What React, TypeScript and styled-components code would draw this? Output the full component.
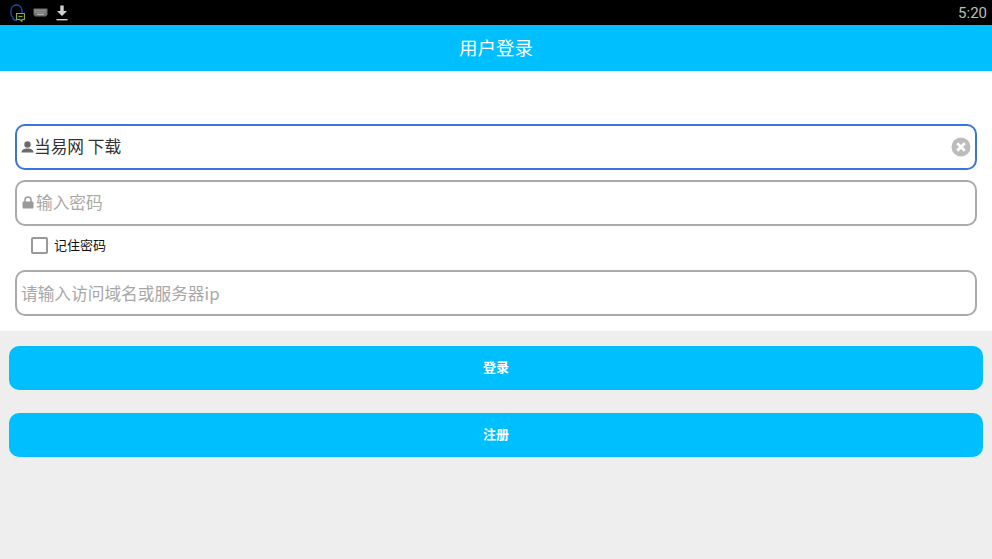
import React, { FC, ReactNode } from 'react';
import styled, { createGlobalStyle } from 'styled-components';

const FONT = `"Noto Sans CJK SC", "Liberation Sans", sans-serif`;

const GlobalStyle = createGlobalStyle`
  html, body {
    margin: 0;
    padding: 0;
    height: 100%;
    background: #eeeeee;
    font-family: ${FONT};
  }
  * {
    box-sizing: border-box;
  }
`;

const HeadsetIcon: FC = () => (
  <svg width="15" height="18" viewBox="0 0 15 18" fill="none">
    <path d="M3.500 13.500C1.800 12.800 1 11.500 1 9.500V6.500a5.500 5.500 0 0 1 11 0V9" stroke="#1a4cb4" strokeWidth="1.300" />
    <path d="M2.500 14c1 1.800 2.500 2.500 4.500 2.500" stroke="#1a4cb4" strokeWidth="1.300" />
    <path d="M6.500 9.500h8v6h-2.500v2l-2-2H6.500z" fill="#0c100a" stroke="#8aa82a" strokeWidth="1.100" />
    <path d="M8.500 12.500h4" stroke="#8aa82a" strokeWidth="1" />
  </svg>
);

const KeyboardIcon: FC = () => (
  <svg width="15" height="9" viewBox="0 0 15 9">
    <path d="M0.500 0.500h14v6l-1.500 2H2l-1.500-2z" fill="#6e6e6e" />
    <path d="M1.500 2.200h12M1.500 4.200h12" stroke="#c4c4c4" strokeWidth="1" strokeDasharray="1 1" />
    <path d="M4 6.300h7" stroke="#c4c4c4" strokeWidth="1" />
  </svg>
);

const DownloadIcon: FC = () => (
  <svg width="12" height="16" viewBox="0 0 12 16">
    <path d="M4.300 0.500h3.400v5.500H11L6 11 1 6h3.300z" fill="#d0d0d0" />
    <rect x="0.500" y="14" width="11" height="1.400" fill="#d0d0d0" />
  </svg>
);

const UserIcon: FC = () => (
  <svg width="13" height="12" viewBox="0 0 13 12">
    <circle cx="6.500" cy="3.500" r="3.200" fill="#6b6b6b" />
    <path d="M0.500 11.500c0-2.800 2.500-4 6-4s6 1.200 6 4z" fill="#6b6b6b" />
  </svg>
);

const LockIcon: FC = () => (
  <svg width="15" height="13" viewBox="0 0 15 13">
    <path d="M4 6V4a3 3 0 0 1 6 0v2" fill="none" stroke="#9a9a9a" strokeWidth="1.500" />
    <rect x="1.500" y="5.500" width="11" height="7" rx="1" fill="#9a9a9a" />
  </svg>
);

const ClearIcon: FC = () => (
  <svg width="20" height="20" viewBox="0 0 20 20">
    <circle cx="10" cy="10" r="9.500" fill="#bcbcbc" />
    <path d="M6.200 6.200l7.600 7.600M13.800 6.200l-7.600 7.600" stroke="#fff" strokeWidth="2.800" />
  </svg>
);

type FieldProps = {
  icon?: ReactNode;
  active?: boolean;
  value?: string;
  placeholder?: string;
  trailing?: ReactNode;
};

const Field: FC<FieldProps> = ({ icon, active = false, value, placeholder, trailing }) => (
  <FieldBox $active={active} $bare={!icon}>
    {icon && <FieldIcon>{icon}</FieldIcon>}
    <FieldText $filled={!!value}>{value ?? placeholder}</FieldText>
    {trailing}
  </FieldBox>
);

const App: FC = () => {
  return (
    <Page>
      <GlobalStyle />
      <StatusBar>
        <StatusIcons>
          <HeadsetIcon />
          <KeyboardIcon />
          <DownloadIcon />
        </StatusIcons>
        <Clock>5:20</Clock>
      </StatusBar>
      <Header>用户登录</Header>
      <Form>
        <Field
          active
          icon={<UserIcon />}
          value="当易网 下载"
          trailing={
            <ClearSlot>
              <ClearIcon />
            </ClearSlot>
          }
        />
        <Field icon={<LockIcon />} placeholder="输入密码" />
        <RememberRow>
          <Checkbox />
          <RememberLabel>记住密码</RememberLabel>
        </RememberRow>
        <Field placeholder="请输入访问域名或服务器ip" />
      </Form>
      <Actions>
        <ActionButton>登录</ActionButton>
        <ActionButton>注册</ActionButton>
      </Actions>
    </Page>
  );
};

export default App;

const Page = styled.div`
  width: 992px;
  height: 559px;
  overflow: hidden;
  display: flex;
  flex-direction: column;
  background: #eeeeee;
`;

const StatusBar = styled.div`
  height: 25px;
  background: #000;
  display: flex;
  align-items: center;
  justify-content: space-between;
  padding: 0 5px 0 10px;
`;

const StatusIcons = styled.div`
  display: flex;
  align-items: center;
  gap: 8px;
`;

const Clock = styled.span`
  font-family: Roboto, sans-serif;
  font-size: 15px;
  color: #bdbdbd;
`;

const Header = styled.div`
  height: 46px;
  padding-bottom: 3px;
  background: #00bfff;
  color: #fff;
  font-size: 18.500px;
  display: flex;
  align-items: center;
  justify-content: center;
`;

const Form = styled.div`
  height: 260px;
  background: #fff;
  padding: 53px 15px 0;
  display: flex;
  flex-direction: column;
`;

const FieldBox = styled.div<{ $active: boolean; $bare: boolean }>`
  height: 46px;
  margin-bottom: 10px;
  border: ${p => (p.$active ? '2.500px solid #3b73e0' : '2px solid #aaaaaa')};
  border-radius: 10px;
  padding: 0 4px ${p => (p.$bare ? '0' : '2px')} ${p => (p.$bare ? '4px' : '5px')};
  display: flex;
  align-items: center;
  background: #fff;
`;

const FieldIcon = styled.span`
  display: flex;
  margin: 1px 0 0 -1px;
`;

const FieldText = styled.span<{ $filled: boolean }>`
  flex: 1;
  font-size: 16.700px;
  color: ${p => (p.$filled ? '#333333' : '#a8a8a8')};
  white-space: nowrap;
`;

const ClearSlot = styled.span`
  display: flex;
  margin-top: 1px;
`;

const RememberRow = styled.div`
  height: 34px;
  margin-top: -6px;
  margin-bottom: 6px;
  padding: 0 0 4px 16px;
  display: flex;
  align-items: center;
  gap: 6px;
`;

const Checkbox = styled.span`
  width: 17px;
  height: 17px;
  border: 2px solid #999999;
  border-radius: 2px;
`;

const RememberLabel = styled.span`
  font-size: 13px;
  padding-bottom: 1px;
  color: #111;
`;

const Actions = styled.div`
  padding: 15px 9px 0;
  display: flex;
  flex-direction: column;
  gap: 23px;
`;

const ActionButton = styled.div`
  height: 44px;
  padding-bottom: 3px;
  background: #00bfff;
  border-radius: 10px;
  color: #fff;
  font-size: 13px;
  font-weight: 700;
  display: flex;
  align-items: center;
  justify-content: center;
`;
